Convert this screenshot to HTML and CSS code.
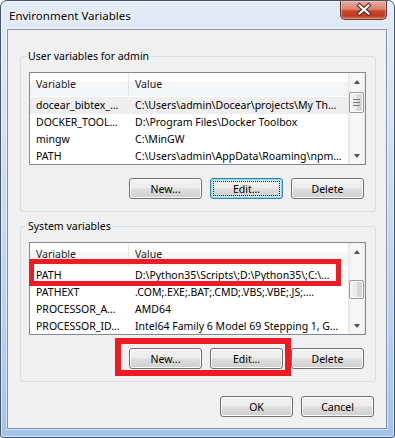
FILE: index.html
```html
<!DOCTYPE html>
<html lang="en">

<head>
    <meta charset="UTF-8">
    <title>Environment Variables</title>
    <link rel="stylesheet" href="styles.css">
</head>

<body>
    <div class="window">
        <div class="titlebar">
            <span class="title">Environment Variables</span>
            <div class="close">
                <svg width="47" height="19" viewBox="0 0 47 19">
                    <path d="M19.5 5.5 L28.5 13.5 M28.5 5.5 L19.5 13.5" stroke="#4a2a24" stroke-width="4.2" stroke-linecap="square" fill="none"/>
                    <path d="M19.5 5.5 L28.5 13.5 M28.5 5.5 L19.5 13.5" stroke="#ffffff" stroke-width="2.2" stroke-linecap="square" fill="none"/>
                </svg>
            </div>
        </div>

        <div class="client">
            <fieldset class="group">
                <legend>User variables for admin</legend>
                <div class="list">
                    <div class="list-body">
                        <div class="list-head"><span>Variable</span><span>Value</span></div>
                        <div class="row selected"><span>docear_bibtex_…</span><span>C:\Users\admin\Docear\projects\My Th…</span></div>
                        <div class="row"><span>DOCKER_TOOL…</span><span>D:\Program Files\Docker Toolbox</span></div>
                        <div class="row"><span>mingw</span><span>C:\MinGW</span></div>
                        <div class="row"><span>PATH</span><span>C:\Users\admin\AppData\Roaming\npm…</span></div>
                    </div>
                    <div class="scrollbar">
                        <div class="arrow"><i class="tri up"></i></div>
                        <div class="track">
                            <div class="thumb thumb-top"><i class="grip"></i></div>
                        </div>
                        <div class="arrow"><i class="tri down"></i></div>
                    </div>
                </div>
                <div class="buttons">
                    <button>New...</button>
                    <button class="default">Edit...</button>
                    <button>Delete</button>
                </div>
            </fieldset>

            <fieldset class="group group-system">
                <legend>System variables</legend>
                <div class="list">
                    <div class="list-body">
                        <div class="list-head"><span>Variable</span><span>Value</span></div>
                        <div class="row"><span>PATH</span><span>D:\Python35\Scripts\;D:\Python35\;C:\…</span></div>
                        <div class="row"><span>PATHEXT</span><span>.COM;.EXE;.BAT;.CMD;.VBS;.VBE;.JS;.…</span></div>
                        <div class="row"><span>PROCESSOR_A…</span><span>AMD64</span></div>
                        <div class="row"><span>PROCESSOR_ID…</span><span>Intel64 Family 6 Model 69 Stepping 1, G…</span></div>
                    </div>
                    <div class="scrollbar">
                        <div class="arrow"><i class="tri up"></i></div>
                        <div class="track">
                            <div class="thumb thumb-mid"></div>
                        </div>
                        <div class="arrow"><i class="tri down"></i></div>
                    </div>
                </div>
                <div class="buttons">
                    <button>New...</button>
                    <button>Edit...</button>
                    <button>Delete</button>
                </div>
            </fieldset>

            <div class="buttons footer">
                <button>OK</button>
                <button>Cancel</button>
            </div>
        </div>

        <!-- red annotation boxes -->
        <div class="mark mark-row"></div>
        <div class="mark mark-buttons"></div>
    </div>
</body>

</html>
```

FILE: styles.css
```css
body {
    margin: 0;
    font-family: "Noto Sans", "Open Sans", sans-serif;
    font-size: 10.5px;
    background-color: #ffffff;
}

.window {
    position: relative;
    width: 395px;
    height: 438px;
    box-sizing: border-box;
    padding: 0 7px 8px 6px;
    display: flex;
    flex-direction: column;
    border: 1px solid #43546a;
    border-radius: 7px 7px 3px 3px;
    background: linear-gradient(to bottom, #e3ecf7 0%, #cfdff1 35%, #b6d0ee 75%, #a3c3e9 100%);
    box-shadow: inset 0 0 0 1px rgba(255, 255, 255, 0.6);
}

.titlebar {
    height: 28px;
    display: flex;
    justify-content: space-between;
    align-items: flex-start;
}

.title {
    margin: 7px 0 0 2px;
    font-size: 11.5px;
    line-height: 15px;
    color: #000;
    text-shadow: 0 0 6px #fff, 0 0 3px #fff;
}

.close {
    width: 47px;
    height: 19px;
    box-sizing: border-box;
    border: 1px solid #5a3430;
    border-top: none;
    border-radius: 0 0 5px 5px;
    background: linear-gradient(to bottom, #e9aa9b 0%, #dc8470 45%, #c8462c 55%, #c23b20 80%, #d2643f 100%);
    box-shadow: inset 0 0 0 1px rgba(255, 220, 210, 0.45);
}

.close svg {
    display: block;
    margin: -1px 0 0 -1px;
}

.client {
    flex: 1;
    display: flex;
    flex-direction: column;
    border: 1px solid #7f91a8;
    background-color: #f0f0f0;
    box-shadow: 0 0 0 1px rgba(255, 255, 255, 0.55);
}

.group {
    margin: 19px 10px 0 12px;
    padding: 9px 9px 12px 8px;
    border: 1px solid #d5dfe5;
    border-radius: 3px;
    min-width: 0;
}

.group-system {
    margin-top: 7px;
}

.group legend {
    margin-left: -2px;
    padding: 0 1px;
    line-height: 14px;
    color: #000;
}

.list {
    display: flex;
    height: 93px;
    box-sizing: border-box;
    border: 1px solid #828790;
    background-color: #fff;
    overflow: hidden;
}

.list-body {
    flex: 1;
    min-width: 0;
}

.list-head,
.row {
    display: grid;
    grid-template-columns: 99px 1fr;
}

.list-head {
    height: 23px;
    margin-bottom: 1px;
    background: linear-gradient(to bottom, #ffffff 0%, #ffffff 40%, #f5f6f7 41%, #f3f4f6 100%);
}

.list-head span {
    padding-left: 6px;
    line-height: 23px;
    color: #1e1e1e;
}

.list-head span:first-child {
    border-right: 1px solid #e3e6ea;
}

.row {
    height: 17px;
}

.row span {
    padding-left: 6px;
    line-height: 17px;
    white-space: nowrap;
    overflow: hidden;
}

.row span:first-child {
    padding-right: 4px;
}

.row.selected {
    background-color: #eeeeee;
}

.scrollbar {
    width: 17px;
    display: flex;
    flex-direction: column;
    background: linear-gradient(to right, #e6e6e6 0%, #f6f6f6 20%, #f6f6f6 80%, #eaeaea 100%);
}

.arrow {
    height: 17px;
    display: flex;
    align-items: center;
    justify-content: center;
}

.tri {
    width: 0;
    height: 0;
    border-left: 3.5px solid transparent;
    border-right: 3.5px solid transparent;
}

.tri.up {
    border-bottom: 4px solid #505050;
}

.tri.down {
    border-top: 4px solid #505050;
}

.track {
    flex: 1;
}

.thumb {
    margin: 0 1px 0 1px;
    box-sizing: border-box;
    border: 1px solid #979797;
    border-radius: 2px;
    background: linear-gradient(to right, #f3f3f3 0%, #e9e9e9 50%, #d9d9d9 51%, #d4d4d4 100%);
    box-shadow: inset 0 0 0 1px #fbfbfb;
    display: flex;
    align-items: center;
    justify-content: center;
}

.thumb-top {
    margin-top: 2px;
    height: 21px;
}

.thumb-mid {
    margin-top: 20px;
    height: 19px;
}

.grip {
    width: 7px;
    height: 5px;
    border-top: 1px solid #7a7a7a;
    border-bottom: 1px solid #7a7a7a;
    background: linear-gradient(to bottom, transparent 2px, #7a7a7a 2px, #7a7a7a 3px, transparent 3px);
}

.buttons {
    display: flex;
    justify-content: flex-end;
    gap: 8px;
    margin-top: 13px;
    padding-right: 2px;
}

button {
    width: 73px;
    height: 21px;
    padding: 0;
    font-family: "Noto Sans", "Open Sans", sans-serif;
    font-size: 10.5px;
    color: #000;
    border: 1px solid #707070;
    border-radius: 3px;
    background: linear-gradient(to bottom, #f2f2f2 0%, #ebebeb 48%, #dddddd 52%, #cfcfcf 100%);
    box-shadow: inset 0 0 0 1px #fcfcfc;
}

button.default {
    border-color: #3c7fb1;
    box-shadow: inset 0 0 0 1px #7fdcf9, inset 0 0 0 2px #c4f0fc;
    outline: 1px dotted #1a1a1a;
    outline-offset: -4px;
}

.footer {
    margin-top: 14px;
    margin-right: 10px;
}

.mark {
    position: absolute;
    box-sizing: border-box;
    border: 5px solid #ed1c24;
}

.mark-row {
    left: 28px;
    top: 258px;
    width: 312px;
    height: 27px;
}

.mark-buttons {
    left: 114px;
    top: 337px;
    width: 176px;
    height: 38px;
    border-width: 6px;
}
```
